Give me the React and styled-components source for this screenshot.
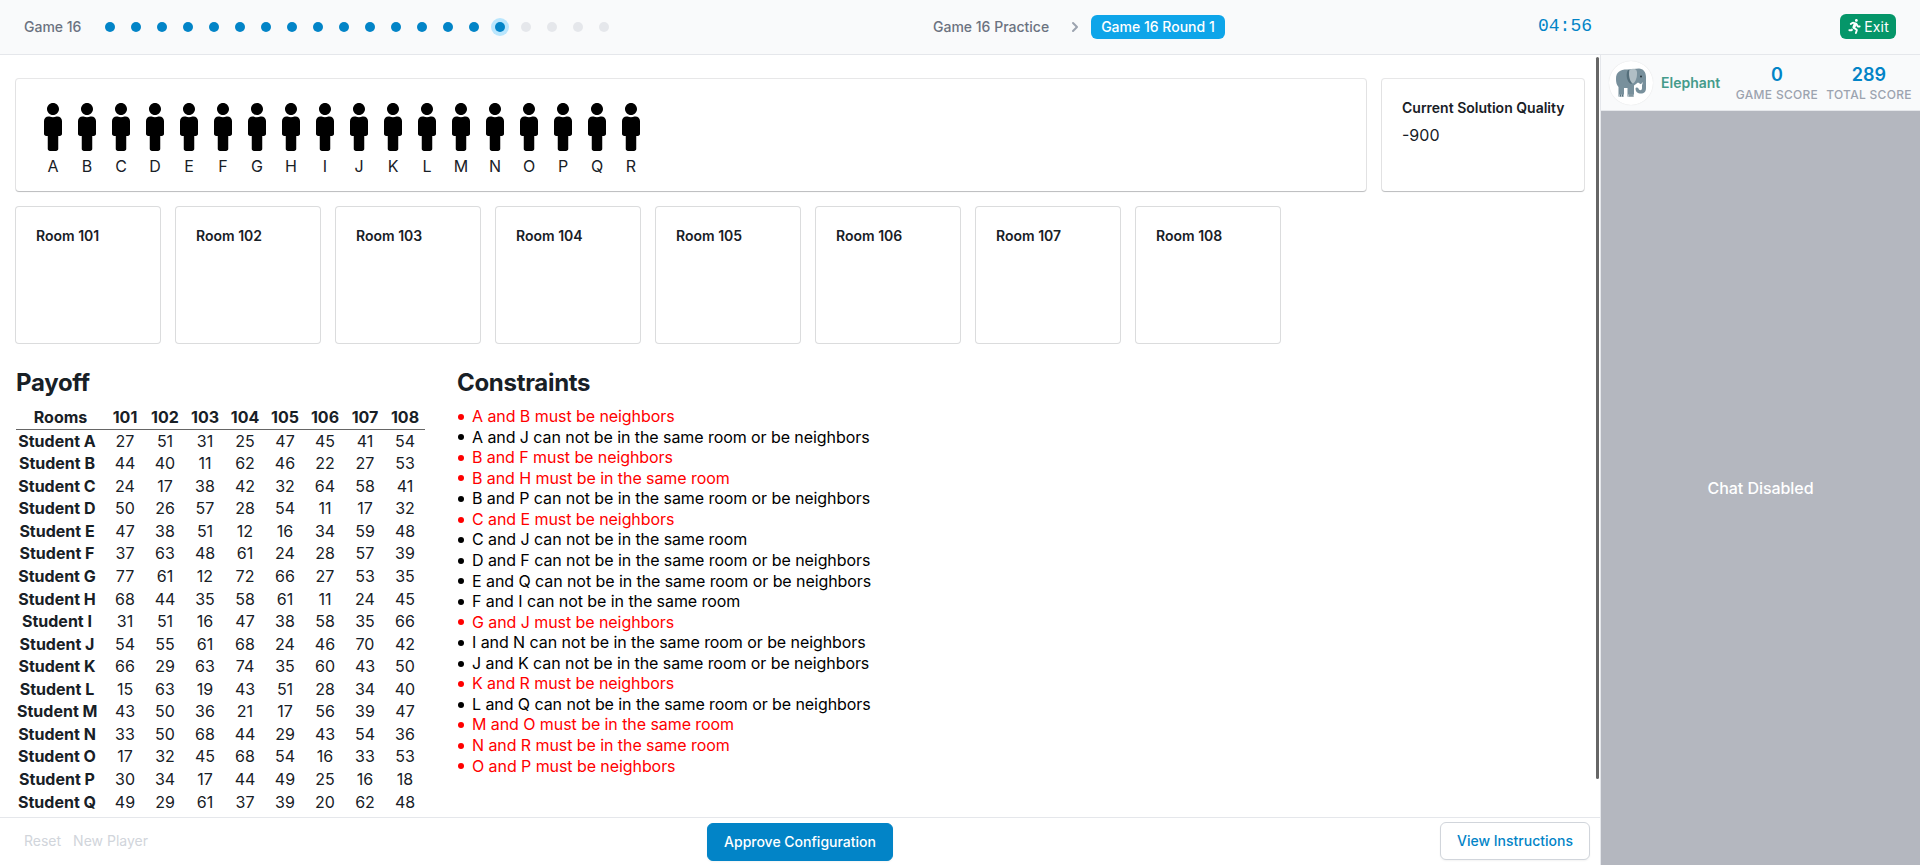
import React from 'react';
import styled, { createGlobalStyle } from 'styled-components';
import { FaMale, FaRunning } from 'react-icons/fa';

const Global = createGlobalStyle`
  *, *::before, *::after { box-sizing: border-box; }
  body { margin: 0; background: #fff; color: #182026; font-family: Inter, "Liberation Sans", sans-serif; font-size: 16px; line-height: 1.28581; overflow: hidden; }
  h2, h6, p, ul { margin: 0; padding: 0; }
  button { font-family: inherit; margin: 0; }
`;
const Page = styled.div`height: 865px; width: 1920px; display: flex; flex-direction: column;`;
const Header = styled.header`
  height: 55px; flex: none; background: #f9fafb; border-bottom: 1px solid #e5e7eb;
  display: grid; grid-template-columns: 933px 623px 1fr; align-items: center;
  font-size: 14px; font-weight: 500; color: #6b7280; line-height: 20px; padding: 0 24px 1px 0;
`;
const Progress = styled.div`display: flex; align-items: center; padding-left: 24px;`;
const GameName = styled.span`width: 81px;`;
const Dots = styled.div`display: flex; gap: 16px;`;
const Dot = styled.span`
  width: 10px; height: 10px; border-radius: 50%;
  background: ${p => (p.$state === 'todo' ? '#e5e7eb' : '#0284c7')};
  box-shadow: ${p => (p.$state === 'current' ? '0 0 0 4px #bae6fd' : 'none')};
`;
const Stages = styled.div`display: flex; align-items: center;`;
const Chevron = styled.svg`width: 20px; height: 20px; margin: 0 6px 0 16px; color: #9ca3af;`;
const Current = styled.span`background: #0ea5e9; color: #fff; border-radius: 6px; padding: 2px 10px; height: 24px;`;
const Right = styled.div`display: flex; align-items: center; justify-content: space-between;`;
const Timer = styled.span`font: 18px/28px "Liberation Mono", monospace; color: #0284c7; margin: -2px 0 0 -18px;`;
const Exit = styled.button`
  border: 0; border-radius: 6px; background: #059669; color: #fff; width: 56px; height: 25px; padding: 0 7px;
  display: flex; align-items: center; justify-content: space-between; font-size: 14px; font-weight: 400; letter-spacing: .2px;
`;
const Body = styled.div`flex: 1; min-height: 0; display: flex;`;
const Main = styled.main`width: 1600px; flex: none; display: flex; flex-direction: column;`;
const Viewport = styled.div`height: 762px; display: flex; overflow: hidden;`;
const Content = styled.div`width: 1596px; padding: 24px 12px 0 16px;`;
const ScrollThumb = styled.div`width: 3px; height: 722px; margin-top: 2px; border-radius: 2px; background: #666;`;
const TopRow = styled.div`display: flex; gap: 16px;`;
const Card = styled.section`
  width: ${p => p.$width}px; height: ${p => p.$height}px; padding: 20px; border-radius: 3px; background: #fff;
  box-shadow: ${p => (p.$raised ? '0 0 0 1px rgba(16,22,26,.1), 0 1px 1px rgba(16,22,26,.2)' : '0 0 0 1px rgba(16,22,26,.15)')};
`;
const People = styled(Card)`display: flex; padding: 24px 20px 0;`;
const Person = styled.div`
  width: 34px; display: flex; flex-direction: column; align-items: center; gap: 5px;
  svg { flex: none; width: 18px; height: 48px; color: #000; }
`;
const CardTitle = styled.h6`font-size: 14px; font-weight: 600; line-height: 18px; white-space: nowrap;`;
const Quality = styled.p`margin-top: 8px;`;
const Rooms = styled.div`display: flex; gap: 16px; margin-top: 16px;`;
const Columns = styled.div`display: flex; gap: 32px; margin-top: 24px;`;
const Title = styled.h2`font-size: 24px; font-weight: 700; line-height: 32px; letter-spacing: -.3px;`;
const Table = styled.table`
  width: 409px; table-layout: fixed; border-collapse: collapse; margin-top: 7px; text-align: center;
  th, td { padding: 1px; }
  thead tr { border-bottom: 1px solid #666; }
  tbody th { padding-right: 8px; white-space: nowrap; }
`;
const Col = styled.col`width: ${p => p.$width}px;`;
const List = styled.ul`margin-top: 7px; list-style: none; letter-spacing: -.072px;`;
const Rule = styled.li`
  display: flex; align-items: center; color: ${p => (p.$broken ? '#f00' : '#000')};
  &::before { content: ''; width: 6px; height: 6px; margin: 1px 8px 0 1px; border-radius: 50%; background: currentColor; }
`;
const Footer = styled.footer`
  height: 48px; border-top: 1px solid #e5e7eb; padding: 0 10px 0 24px;
  display: grid; grid-template-columns: 683px 1fr auto; align-items: start;
`;
const Links = styled.div`display: flex; gap: 12px; font-size: 14px; line-height: 20px; color: #d1d5db; padding-top: 13px;`;
const Button = styled.button`
  height: 38px; width: ${p => p.$width}px; margin-top: ${p => (p.$primary ? 5 : 4)}px; border-radius: 6px;
  border: 1px solid ${p => (p.$primary ? '#0284c7' : '#d1d5db')};
  background: ${p => (p.$primary ? '#0284c7' : '#fff')}; color: ${p => (p.$primary ? '#fff' : '#0284c7')};
  box-shadow: 0 1px 2px rgba(0,0,0,.05); font-size: 14px; font-weight: 500; line-height: 20px; padding: 0;
`;
const Side = styled.aside`flex: 1; min-width: 0; border-left: 1px solid #e5e7eb; display: flex; flex-direction: column;`;
const Player = styled.div`
  height: 56px; background: #f9fafb; border-bottom: 1px solid #e5e7eb; display: flex; align-items: center; padding: 0 8px;
`;
const Avatar = styled.div`
  width: 44px; height: 44px; flex: none; border-radius: 50%; background: #fff; box-shadow: 0 0 1px rgba(0,0,0,.15);
  display: flex; align-items: center; justify-content: center;
`;
const PlayerName = styled.span`font-size: 14px; font-weight: 600; color: #459b8b; margin-left: 8px; width: 67px;`;
const Score = styled.div`width: ${p => p.$width}px; text-align: center; font-size: 12px; line-height: 16px; font-weight: 500; color: #9ca3af; letter-spacing: .3px; white-space: nowrap;`;
const Value = styled.div`font-size: 18px; line-height: 24px; font-weight: 600; color: #0284c7; letter-spacing: 0;`;
const Chat = styled.div`flex: 1; background: #b4b7bf; color: #fff; font-weight: 500; letter-spacing: -.05px; display: flex; align-items: center; justify-content: center;`;

const letters = 'ABCDEFGHIJKLMNOPQR'.split('');
const rooms = [101, 102, 103, 104, 105, 106, 107, 108];
const payoff = [
  [27, 51, 31, 25, 47, 45, 41, 54], [44, 40, 11, 62, 46, 22, 27, 53], [24, 17, 38, 42, 32, 64, 58, 41],
  [50, 26, 57, 28, 54, 11, 17, 32], [47, 38, 51, 12, 16, 34, 59, 48], [37, 63, 48, 61, 24, 28, 57, 39],
  [77, 61, 12, 72, 66, 27, 53, 35], [68, 44, 35, 58, 61, 11, 24, 45], [31, 51, 16, 47, 38, 58, 35, 66],
  [54, 55, 61, 68, 24, 46, 70, 42], [66, 29, 63, 74, 35, 60, 43, 50], [15, 63, 19, 43, 51, 28, 34, 40],
  [43, 50, 36, 21, 17, 56, 39, 47], [33, 50, 68, 44, 29, 43, 54, 36], [17, 32, 45, 68, 54, 16, 33, 53],
  [30, 34, 17, 44, 49, 25, 16, 18], [49, 29, 61, 37, 39, 20, 62, 48],
];
const NEAR = 'must be neighbors';
const SAME = 'must be in the same room';
const APART = 'can not be in the same room';
const FAR = 'can not be in the same room or be neighbors';
const rules = [
  ['A and B', NEAR], ['A and J', FAR], ['B and F', NEAR], ['B and H', SAME], ['B and P', FAR], ['C and E', NEAR],
  ['C and J', APART], ['D and F', FAR], ['E and Q', FAR], ['F and I', APART], ['G and J', NEAR], ['I and N', FAR],
  ['J and K', FAR], ['K and R', NEAR], ['L and Q', FAR], ['M and O', SAME], ['N and R', SAME], ['O and P', NEAR],
];

const Elephant = () => (
  <svg width="30" height="29" viewBox="0 0 30 29">
    <path d="M0 11C0 4 4 1.500 11 1.500L23 .5C27 .5 30 4 30 9V20C30 24 28 25.500 25 25.500C21.500 25.500 19.500 23.500 19.500 20.500C19.500 19 22 19 22.500 20.500C23 22.500 26 23 26 20V17L22 14.500 18 17.500V28.500H11.500V20H8V28.500H2.500V19C.5 17 0 14 0 11Z" fill="#78909c" />
    <path d="M2.500 26.500H8v2H2.500zM11.500 26.500H18v2h-6.500z" fill="#b0bec5" />
    <path d="M4 26.500h1v2H4zM6 26.500h1v2H6zM13.500 26.500h1v2h-1zM15.500 26.500h1v2h-1z" fill="#546e7a" />
    <path d="M12 2c-2 3-2 9 1.500 13 1 .8 2 .8 3 .3L14 2z" fill="#546e7a" />
    <path d="M13.500 2c3-2 7-1.500 7.500 2 .3 5-1.200 10-4 11.500-3-.5-5-9-3.500-13.500z" fill="#b0bec5" />
    <path d="M20 17.500c2.500.5 5-.5 6.500-3.500.5 4-2.500 6-6.500 5z" fill="#fff" />
    <circle cx="25" cy="8.500" r="1" fill="#263238" />
  </svg>
);

export default function App() {
  return (
    <Page>
      <Global />
      <Header>
        <Progress>
          <GameName>Game 16</GameName>
          <Dots>{Array.from({ length: 20 }, (_, i) => <Dot key={i} $state={i < 15 ? 'done' : i === 15 ? 'current' : 'todo'} />)}</Dots>
        </Progress>
        <Stages>
          <span>Game 16 Practice</span>
          <Chevron viewBox="0 0 20 20" fill="currentColor"><path fillRule="evenodd" d="M7.293 14.707a1 1 0 010-1.414L10.586 10 7.293 6.707a1 1 0 011.414-1.414l4 4a1 1 0 010 1.414l-4 4a1 1 0 01-1.414 0z" /></Chevron>
          <Current>Game 16 Round 1</Current>
        </Stages>
        <Right>
          <Timer>04:56</Timer>
          <Exit><FaRunning size={15} />Exit</Exit>
        </Right>
      </Header>
      <Body>
        <Main>
          <Viewport>
            <Content>
              <TopRow>
                <People $width={1350} $height={112} $raised>
                  {letters.map(l => <Person key={l}><FaMale />{l}</Person>)}
                </People>
                <Card $width={202} $height={112} $raised>
                  <CardTitle>Current Solution Quality</CardTitle>
                  <Quality>-900</Quality>
                </Card>
              </TopRow>
              <Rooms>{rooms.map(r => <Card key={r} $width={144} $height={136}><CardTitle>Room {r}</CardTitle></Card>)}</Rooms>
              <Columns>
                <div>
                  <Title>Payoff</Title>
                  <Table>
                    <colgroup><Col $width={89} />{rooms.map(r => <Col key={r} $width={40} />)}</colgroup>
                    <thead><tr><th>Rooms</th>{rooms.map(r => <th key={r}>{r}</th>)}</tr></thead>
                    <tbody>
                      {payoff.map((row, i) => (
                        <tr key={i}><th>Student {letters[i]}</th>{row.map((v, j) => <td key={j}>{v}</td>)}</tr>
                      ))}
                    </tbody>
                  </Table>
                </div>
                <div>
                  <Title>Constraints</Title>
                  <List>{rules.map(([pair, rule]) => <Rule key={pair} $broken={rule === NEAR || rule === SAME}>{pair} {rule}</Rule>)}</List>
                </div>
              </Columns>
            </Content>
            <ScrollThumb />
          </Viewport>
          <Footer>
            <Links><span>Reset</span><span>New Player</span></Links>
            <div><Button $primary $width={186}>Approve Configuration</Button></div>
            <Button $width={150}>View Instructions</Button>
          </Footer>
        </Main>
        <Side>
          <Player>
            <Avatar><Elephant /></Avatar>
            <PlayerName>Elephant</PlayerName>
            <Score $width={98}><Value>0</Value>GAME SCORE</Score>
            <Score $width={86}><Value>289</Value>TOTAL SCORE</Score>
          </Player>
          <Chat>Chat Disabled</Chat>
        </Side>
      </Body>
    </Page>
  );
}
